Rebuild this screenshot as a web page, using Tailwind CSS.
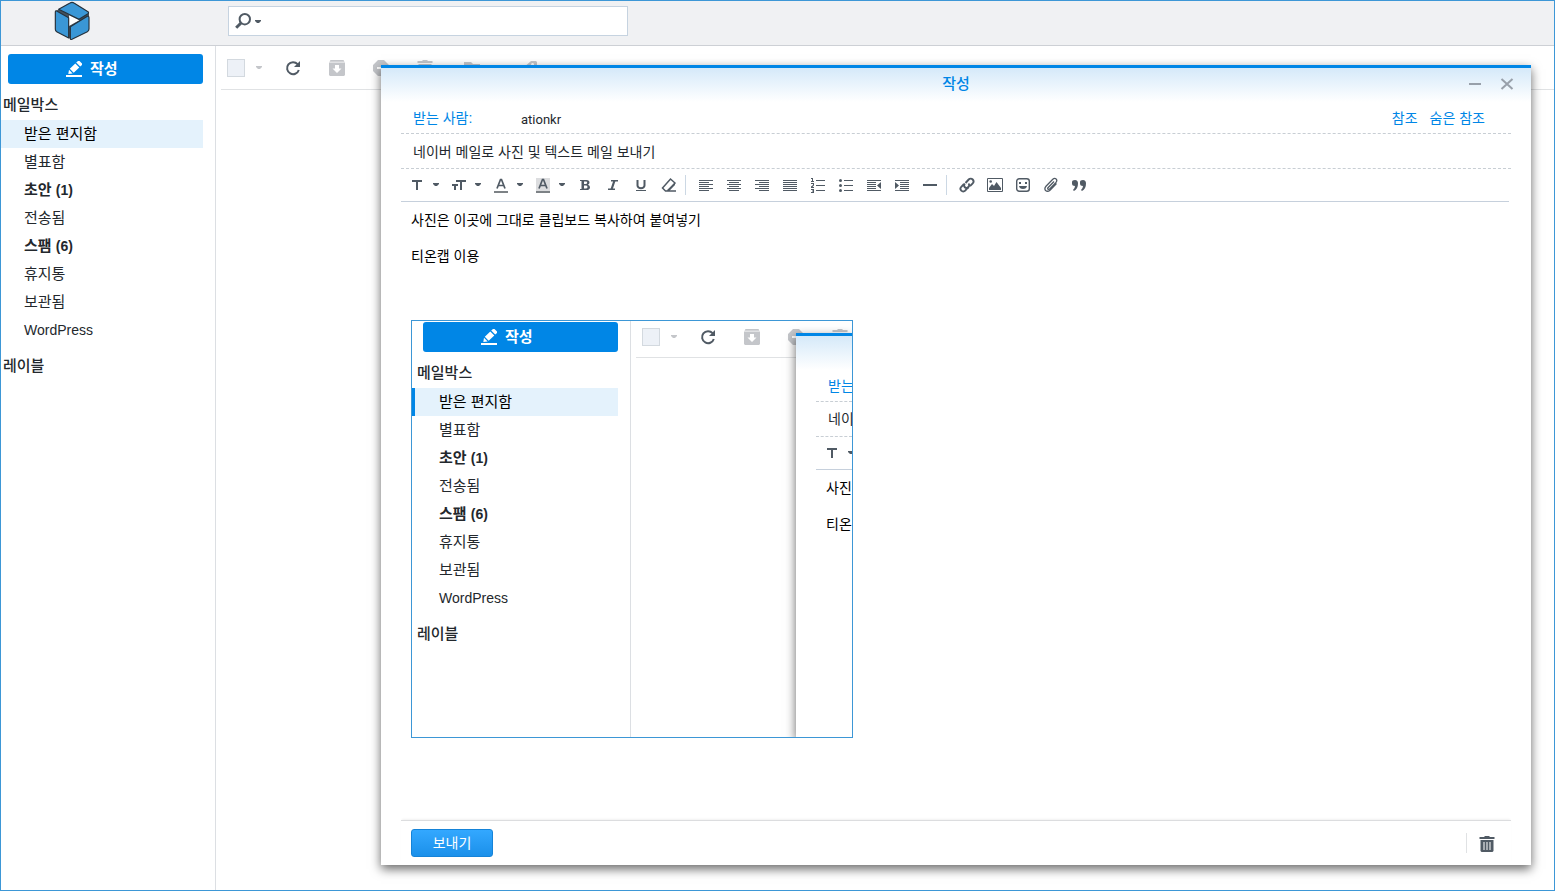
<!DOCTYPE html>
<html lang="ko">
<head>
<meta charset="utf-8">
<meta name="viewport" content="width=device-width, initial-scale=1">
<title>메일 작성</title>
<script src="https://cdn.jsdelivr.net/npm/@tailwindcss/browser@4"></script>
</head>
<body class="bg-white font-['Liberation_Sans','Noto_Sans_CJK_KR',sans-serif] text-[#23282d]">

<svg class="hidden" aria-hidden="true">
  <symbol id="caret" viewBox="0 0 6 4"><path d="M0 0h6v1L4 3H2L0 1z" fill="currentColor"/></symbol>
  <symbol id="pencil" viewBox="0 0 16 16"><path d="M0 14h16v2H0zM2.300 13 3 8.800l3.700 3.700zM3.800 7.800 9.300 2.400l4 4-5.600 5.400zM10.200 1.600 12 0h1.500L16 2.500V4l-1.800 1.600z" fill="currentColor"/></symbol>
  <symbol id="refresh" viewBox="0 0 16 16"><path d="M12.600 4.200A6 6 0 1 0 13.800 10" fill="none" stroke="currentColor" stroke-width="2"/><path d="M15 1v6H9z" fill="currentColor"/></symbol>
  <symbol id="archive" viewBox="0 0 16 16"><path d="M1.500 0h13l1 1.700H.500z" fill="currentColor"/><path fill-rule="evenodd" d="M0 2.500h16V15l-1 1H1l-1-1zM6 5v3.500H3.500L8 13l4.500-4.500H10V5z" fill="currentColor"/></symbol>
  <symbol id="block" viewBox="0 0 16 16"><path fill-rule="evenodd" d="M5 0h6l5 5v6l-5 5H5l-5-5V5zM4 7v2h8V7z" fill="currentColor"/></symbol>
  <symbol id="trash" viewBox="0 0 16 16"><path fill-rule="evenodd" d="M.500 1H5.500V0h5v1h5v2H.500zM1.500 4h13v11l-1 1h-11l-1-1zM4.500 6v8h1V6zM7.500 6v8h1V6zM10.500 6v8h1V6z" fill="currentColor"/></symbol>
  <symbol id="folder" viewBox="0 0 16 16"><path d="M0 2h7l2 2h7v12H0z" fill="currentColor"/></symbol>
  <symbol id="tag" viewBox="0 0 16 16"><path fill-rule="evenodd" d="M9 1h5l1 1v6l-7 8-8-7zM10.500 3a1.500 1.500 0 1 0 .1 0z" fill="currentColor"/></symbol>
  <symbol id="text" viewBox="0 0 16 16"><path d="M3 3h10v2H9v8H7V5H3z" fill="currentColor"/></symbol>
</svg>

<div class="relative flex h-screen flex-col overflow-hidden border border-[#3d97d6]">
  <header class="flex h-[45px] shrink-0 border-b border-[#cdd0d5] bg-[#f0f1f3]">
    <a href="#" aria-label="홈" class="ml-[53px] h-10 w-9">
      <svg class="h-10 w-9" viewBox="162 3 108 120">
        <path d="M217 7 267 37v53l-54 28-46-26V33z" fill="#46525c"/>
        <path d="M207 46 238 61 207 78z" fill="#fff"/>
        <g fill="#3a97d6" stroke="#26323c" stroke-width="3.500" stroke-linejoin="round"><path d="M176 28 210 9q6-4 12 0l42 26q3 3 0 6l-27 17z"/><path d="m170 33 36 20v61l-36-19q-4-2-4-7V37q0-6 4-4z"/><path d="M211 80l51-31q5-2 5 4v34q0 5-5 8l-46 23q-5 2-5-3z"/></g>
      </svg>
    </a>
    <div class="mt-[5px] ml-[138px] flex h-[30px] w-[400px] items-center border border-[#c6d3e0] bg-white">
      <button aria-label="검색 옵션" class="flex items-center gap-1 pl-1.5 text-[#505a64]">
        <svg class="size-4" viewBox="0 0 16 16"><circle cx="9.800" cy="6.200" r="5.200" fill="none" stroke="currentColor" stroke-width="2"/><path d="m6 10-4.800 4.800" stroke="currentColor" stroke-width="3"/></svg>
        <svg class="mt-0.5 h-1 w-1.5"><use href="#caret"/></svg>
      </button>
      <input aria-label="검색" type="search" class="h-full min-w-0 flex-1 px-2 text-sm outline-none">
    </div>
  </header>

  <div class="flex min-h-0 flex-1">
    <aside class="w-[215px] shrink-0 border-r border-[#dcdfe3] pt-2">
      <button class="ml-[7px] flex h-[30px] w-[195px] items-center gap-2 rounded-[3px] bg-[#0086e6] pl-[58px] text-[15px] font-bold text-white"><svg class="size-4"><use href="#pencil"/></svg>작성</button>
      <h2 class="mt-1.5 pl-0.5 text-[15px] leading-[30px] font-medium">메일박스</h2>
      <nav class="mr-3 text-[15px] leading-7">
        <a href="#" class="block bg-[#e4f2fc] pl-[23px] text-black">받은 편지함</a>
        <a href="#" class="block pl-[23px]">별표함</a>
        <a href="#" class="block pl-[23px] font-bold">초안 <span class="text-sm">(1)</span></a>
        <a href="#" class="block pl-[23px]">전송됨</a>
        <a href="#" class="block pl-[23px] font-bold">스팸 <span class="text-sm">(6)</span></a>
        <a href="#" class="block pl-[23px]">휴지통</a>
        <a href="#" class="block pl-[23px]">보관됨</a>
        <a href="#" class="block pl-[23px] text-sm leading-7">WordPress</a>
      </nav>
      <h2 class="mt-2 pl-0.5 text-[15px] leading-7 font-medium">레이블</h2>
    </aside>
    <main class="min-w-0 flex-1 pl-[5px]">
      <div class="flex h-11 items-center border-b border-[#e0e2e4] pl-1.5 text-[#c4c6ca]">
        <input type="checkbox" aria-label="모두 선택" class="size-[18px] appearance-none border border-[#d3d9df] bg-[#edf1f7]">
        <button aria-label="선택 옵션" class="ml-[11px]"><svg class="h-1 w-1.5"><use href="#caret"/></svg></button>
        <button aria-label="새로 고침" class="ml-[23px] text-[#505a64]"><svg class="size-4"><use href="#refresh"/></svg></button>
        <button aria-label="보관" class="ml-7"><svg class="size-4"><use href="#archive"/></svg></button>
        <button aria-label="스팸 신고" class="ml-7"><svg class="size-4"><use href="#block"/></svg></button>
        <button aria-label="삭제" class="ml-7"><svg class="size-4"><use href="#trash"/></svg></button>
        <button aria-label="이동" class="ml-[31px]"><svg class="size-4"><use href="#folder"/></svg></button>
        <button aria-label="레이블 지정" class="ml-[42px]"><svg class="size-4"><use href="#tag"/></svg></button>
      </div>
    </main>
  </div>

  <section role="dialog" aria-labelledby="dlg-title" class="absolute top-16 right-[23px] bottom-[25px] left-[380px] flex flex-col border-t-3 border-[#0086e6] bg-white shadow-[0_4px_10px_rgba(0,0,0,0.6)]">
    <div class="grid h-[34px] shrink-0 grid-cols-[1fr_auto_1fr] items-center bg-linear-to-b from-[#d5e9f9] to-white pb-0.5">
      <h1 id="dlg-title" class="col-start-2 text-[15px] leading-5 font-medium text-[#0086e6]">작성</h1>
      <div class="flex justify-end gap-4 pr-4 text-[#98a0aa]">
        <button aria-label="최소화"><svg class="size-4" viewBox="0 0 16 16"><path d="M2 7h12v2H2z" fill="currentColor"/></svg></button>
        <button aria-label="닫기"><svg class="size-4" viewBox="0 0 16 16"><path d="m2.500 3 11 10m0-10-11 10" stroke="currentColor" stroke-width="2"/></svg></button>
      </div>
    </div>
    <div class="mx-5 flex h-8 shrink-0 items-center border-b border-dashed border-[#c8ced4] pr-[26px] pl-3 text-sm text-[#0086e6]">
      <label for="to" class="w-[108px]">받는 사람:</label>
      <input id="to" value="ationkr" class="h-full min-w-0 flex-1 pt-1 font-['Roboto','Noto_Sans_CJK_KR',sans-serif] text-[13px] text-[#23282d] outline-none">
      <a href="#">참조</a><a href="#" class="ml-3">숨은 참조</a>
    </div>
    <div class="mx-5 flex h-[35px] shrink-0 border-b border-dashed border-[#c8ced4] pl-3">
      <input aria-label="제목" value="네이버 메일로 사진 및 텍스트 메일 보내기" class="min-w-0 flex-1 pt-0.5 text-sm outline-none">
    </div>
    <div role="toolbar" aria-label="서식" class="mr-[22px] ml-5 flex h-[33px] shrink-0 items-center border-b border-[#c6d0dc] pl-0.5 text-[#505a64]">
      <button aria-label="글꼴" class="flex w-[42px] items-center gap-2 pl-1.5"><svg class="size-4"><use href="#text"/></svg><svg class="h-1 w-1.5"><use href="#caret"/></svg></button>
      <button aria-label="글자 크기" class="flex w-[42px] items-center gap-2 pl-1.5"><svg class="size-4" viewBox="0 0 16 16"><path d="M5 3h10v2h-4v8H9V5H5zM1 7h6v2H5v4H3V9H1z" fill="currentColor"/></svg><svg class="h-1 w-1.5"><use href="#caret"/></svg></button>
      <button aria-label="글자 색" class="flex w-[42px] items-center gap-2 pl-1.5"><svg class="size-4" viewBox="0 0 16 16"><path d="M1 14h14v2H1z" fill="#7d8286"/><path d="m4 11.500 3.500-9h1l3.500 9M5.200 8.500h5.600" fill="none" stroke="currentColor" stroke-width="1.700"/></svg><svg class="h-1 w-1.5"><use href="#caret"/></svg></button>
      <button aria-label="배경 색" class="flex w-[42px] items-center gap-2 pl-1.5"><svg class="size-4" viewBox="0 0 16 16"><path d="M1 1h14v13H1z" fill="#dcdddf"/><path d="M1 14h14v2H1z" fill="#7d8286"/><path d="m4 11.500 3.500-9h1l3.500 9M5.200 8.500h5.600" fill="none" stroke="currentColor" stroke-width="1.700"/></svg><svg class="h-1 w-1.5"><use href="#caret"/></svg></button>
      <button aria-label="굵게" class="flex w-7 justify-center"><svg class="size-4" viewBox="0 0 16 16"><path fill-rule="evenodd" d="M3 3h6.500q3 0 3 2.500 0 1.600-1.500 2.200 2 .500 2 2.500 0 2.800-3.500 2.800H3v-1h1.500V4H3zM7 4.500V7h2q1.200-.2 1.200-1.300T9 4.500zM7 8.500v3h2.200q1.300-.2 1.300-1.500T9.200 8.500z" fill="currentColor"/></svg></button>
      <button aria-label="기울임" class="flex w-7 justify-center"><svg class="size-4" viewBox="0 0 16 16"><path d="M6 3.700h7M3 12.300h7" stroke="currentColor" stroke-width="1.400"/><path d="M9.500 3.500l-3 9" stroke="currentColor" stroke-width="2.200"/></svg></button>
      <button aria-label="밑줄" class="flex w-7 justify-center"><svg class="size-4" viewBox="0 0 16 16"><path d="M4.500 3v5.500a3.500 2.700 0 0 0 7 0V3" fill="none" stroke="currentColor" stroke-width="2"/><path d="M3 13h10v1H3z" fill="currentColor"/></svg></button>
      <button aria-label="서식 지우기" class="flex w-7 justify-center"><svg class="size-4" viewBox="0 0 16 16"><path d="M9.500 2 14 6l-7 8H4.500L1.500 11zM7 14h8" fill="none" stroke="currentColor" stroke-width="1.500"/><path d="m5.500 13.500 8.500-8v2.500l-6 6z" fill="currentColor"/></svg></button>
      <span class="mr-1.5 ml-0.5 h-5 w-px bg-[#ccd8e4]"></span>
      <button aria-label="왼쪽 맞춤" class="flex w-7 justify-center"><svg class="size-4" viewBox="0 0 16 16" fill="currentColor"><path d="M1 3h14v1H1zM1 5h10v1H1zM1 7h14v1H1zM1 9h10v1H1zM1 11h14v1H1zM1 13h10v1H1z"/></svg></button>
      <button aria-label="가운데 맞춤" class="flex w-7 justify-center"><svg class="size-4" viewBox="0 0 16 16" fill="currentColor"><path d="M1 3h14v1H1zM3 5h10v1H3zM1 7h14v1H1zM3 9h10v1H3zM1 11h14v1H1zM3 13h10v1H3z"/></svg></button>
      <button aria-label="오른쪽 맞춤" class="flex w-7 justify-center"><svg class="size-4" viewBox="0 0 16 16" fill="currentColor"><path d="M1 3h14v1H1zM5 5h10v1H5zM1 7h14v1H1zM5 9h10v1H5zM1 11h14v1H1zM5 13h10v1H5z"/></svg></button>
      <button aria-label="양쪽 맞춤" class="flex w-7 justify-center"><svg class="size-4" viewBox="0 0 16 16" fill="currentColor"><path d="M1 3h14v1H1zM1 5h14v1H1zM1 7h14v1H1zM1 9h14v1H1zM1 11h14v1H1zM1 13h14v1H1z"/></svg></button>
      <button aria-label="번호 목록" class="flex w-7 justify-center"><svg class="size-4" viewBox="0 0 16 16" fill="currentColor"><path d="M6 3h9v1H6zM6 8h9v1H6zM6 13h9v1H6zM1 1h2v3h1v1H1V4h1V2H1zM1 6h3v2.500L2.500 10H4v1H1V9.500L3 8V7H1zM1 12h3v4H1v-1h2v-.5H2v-1h1V13H1z"/></svg></button>
      <button aria-label="글머리 목록" class="flex w-7 justify-center"><svg class="size-4" viewBox="0 0 16 16" fill="currentColor"><path d="M6 3h9v1H6zM6 8h9v1H6zM6 13h9v1H6z"/><circle cx="2.500" cy="3.500" r="1.500"/><circle cx="2.500" cy="8.500" r="1.500"/><circle cx="2.500" cy="13.500" r="1.500"/></svg></button>
      <button aria-label="내어쓰기" class="flex w-7 justify-center"><svg class="size-4" viewBox="0 0 16 16" fill="currentColor"><path d="M1 3h14v1H1zM1 5h9v1H1zM1 7h9v1H1zM1 9h9v1H1zM1 11h9v1H1zM1 13h14v1H1zM15 5v7l-4-3.500z"/></svg></button>
      <button aria-label="들여쓰기" class="flex w-7 justify-center"><svg class="size-4" viewBox="0 0 16 16" fill="currentColor"><path d="M1 3h14v1H1zM6 5h9v1H6zM6 7h9v1H6zM6 9h9v1H6zM6 11h9v1H6zM1 13h14v1H1zM1 5v7l4-3.500z"/></svg></button>
      <button aria-label="가로줄" class="flex w-7 justify-center"><svg class="size-4" viewBox="0 0 16 16"><path d="M1 7h14v2H1z" fill="currentColor"/></svg></button>
      <span class="mr-1.5 ml-0.5 h-5 w-px bg-[#ccd8e4]"></span>
      <button aria-label="링크" class="flex w-7 justify-center"><svg class="size-4" viewBox="0 0 16 16" fill="none" stroke="currentColor" stroke-width="1.900"><path d="M9.600 10.200a2.800 2.800 0 0 1-4-.2 2.700 2.700 0 0 1 .3-3.400"/><path d="M6.500 6 9.700 2.500a2.700 2.700 0 0 1 4 0 2.800 2.800 0 0 1 0 3.800L11 9.200"/><path d="M5 7 2.300 9.800a2.700 2.700 0 0 0 0 3.800 2.700 2.700 0 0 0 3.900 0L9.500 10a2.800 2.800 0 0 0 0-3.500"/></svg></button>
      <button aria-label="그림" class="flex w-7 justify-center"><svg class="size-4" viewBox="0 0 16 16"><path d="M.500 1.500h15v13H.500z" fill="none" stroke="currentColor"/><path d="M2 13v-2l3-4 2 2 2.500-4L14 11v2z" fill="currentColor"/><circle cx="3.700" cy="4.500" r="1.300" fill="currentColor"/></svg></button>
      <button aria-label="이모티콘" class="flex w-7 justify-center"><svg class="size-4" viewBox="0 0 16 16"><rect x="1.700" y="1.700" width="12.600" height="12.600" rx="2.500" fill="none" stroke="currentColor" stroke-width="1.400"/><path d="M4 5h2v2H4zM10 5h2v2h-2zM4 9h8q-.5 3-4 3T4 9z" fill="currentColor"/></svg></button>
      <button aria-label="첨부" class="flex w-7 justify-center"><svg class="size-4" viewBox="0 0 16 16"><path d="m11 4.500-6 6.200q-.7 1 .2 1.600.7.400 1.500-.4l6.300-6.500q1.500-2 .2-3.300-1.600-1.400-3.400.2L3 9.200q-2 2.300-.4 4.300 2 1.700 4.400-.3l6.500-6.700" fill="none" stroke="currentColor" stroke-width="1.300"/></svg></button>
      <button aria-label="인용" class="flex w-7 justify-center"><svg class="size-4" viewBox="0 0 16 16" fill="currentColor"><path d="M1 5q0-2 3-2 3 0 3 3.500Q7 12 3 14l-1-1q2-2 2-4-3 0-3-2.500zM9 5q0-2 3-2 3 0 3 3.500Q15 12 11 14l-1-1q2-2 2-4-3 0-3-2.500z"/></svg></button>
    </div>

    <div contenteditable="true" role="textbox" aria-label="본문" spellcheck="false" class="mx-5 min-h-0 flex-1 overflow-hidden pt-[9px] pl-2.5 text-sm leading-[18px] text-black outline-none">
      <p>사진은 이곳에 그대로 클립보드 복사하여 붙여넣기</p>
      <p class="mt-[18px]">티온캡 이용</p>
      <figure contenteditable="false" class="relative mt-[55px] flex h-[418px] w-[442px] overflow-hidden border border-[#3d97d6] text-[#23282d]">
        <div class="w-[219px] shrink-0 border-r border-[#dcdfe3] pt-px">
          <button class="ml-[11px] flex h-[30px] w-[195px] items-center gap-2 rounded-[3px] bg-[#0086e6] pl-[58px] text-[15px] font-bold text-white"><svg class="size-4"><use href="#pencil"/></svg>작성</button>
          <h2 class="mt-1.5 pl-[5px] text-[15px] leading-[30px] font-medium">메일박스</h2>
          <ul class="mr-3 text-[15px] leading-7">
            <li class="border-l-3 border-[#0086e6] bg-[#e4f2fc] pl-6 text-black">받은 편지함</li>
            <li class="pl-[27px]">별표함</li>
            <li class="pl-[27px] font-bold">초안 <span class="text-sm">(1)</span></li>
            <li class="pl-[27px]">전송됨</li>
            <li class="pl-[27px] font-bold">스팸 <span class="text-sm">(6)</span></li>
            <li class="pl-[27px]">휴지통</li>
            <li class="pl-[27px]">보관됨</li>
            <li class="pl-[27px] text-sm leading-7">WordPress</li>
          </ul>
          <h2 class="mt-2 pl-[5px] text-[15px] leading-7 font-medium">레이블</h2>
        </div>
        <div class="min-w-0 flex-1 pl-[5px]">
          <div class="flex h-[37px] items-center border-b border-[#e0e2e4] pb-1 pl-1.5 text-[#c4c6ca]">
            <input type="checkbox" aria-label="모두 선택" class="size-[18px] shrink-0 appearance-none border border-[#d3d9df] bg-[#edf1f7]">
            <svg class="ml-[11px] h-1 w-1.5 shrink-0"><use href="#caret"/></svg>
            <svg class="ml-[23px] size-4 shrink-0 text-[#505a64]"><use href="#refresh"/></svg>
            <svg class="ml-7 size-4 shrink-0"><use href="#archive"/></svg>
            <svg class="ml-7 size-4 shrink-0"><use href="#block"/></svg>
            <svg class="ml-7 size-4 shrink-0"><use href="#trash"/></svg>
          </div>
        </div>
        <div class="absolute top-3 right-0 bottom-0 w-14 border-t-3 border-[#0086e6] bg-white shadow-[0_4px_10px_rgba(0,0,0,0.6)]">
          <div class="h-[34px] bg-linear-to-b from-[#d5e9f9] to-white"></div>
          <div class="ml-5 h-8 border-b border-dashed border-[#c8ced4] pl-3 leading-8 whitespace-nowrap text-[#0086e6]">받는</div>
          <div class="ml-5 h-[35px] border-b border-dashed border-[#c8ced4] pl-3 leading-[35px] whitespace-nowrap">네이</div>
          <div class="ml-5 flex h-[33px] items-center gap-2 overflow-hidden border-b border-[#c6d0dc] pl-2 text-[#505a64]"><svg class="size-4 shrink-0"><use href="#text"/></svg><svg class="h-1 w-1.5 shrink-0"><use href="#caret"/></svg></div>
          <div class="ml-[30px] pt-[9px] whitespace-nowrap text-black"><p>사진</p><p class="mt-[18px]">티온</p></div>
        </div>
      </figure>
    </div>

    <div class="mx-5 flex h-[45px] shrink-0 items-center border-t border-[#dcdddf] pr-4 pl-2.5 shadow-[0_-2px_2px_-1px_rgba(0,0,0,0.06)]">
      <button class="h-7 w-[82px] rounded-[3px] border border-[#1583d8] bg-linear-to-b from-[#33a8ff] to-[#1a90ea] text-sm text-white">보내기</button>
      <span class="ml-auto h-5 w-px bg-[#e0e2e4]"></span>
      <button aria-label="초안 삭제" class="ml-3 pt-0.5 text-[#505a64]"><svg class="size-4"><use href="#trash"/></svg></button>
    </div>
  </section>
</div>
</body>
</html>
